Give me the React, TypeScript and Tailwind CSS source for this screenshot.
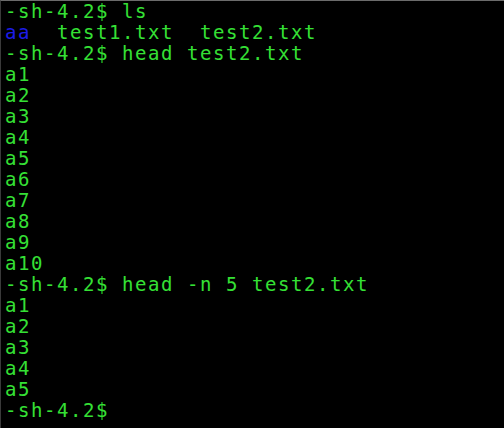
import React from "react";

const lines: { text: string; blue?: string }[] = [
  { text: "-sh-4.2$ ls" },
  { blue: "aa", text: "  test1.txt  test2.txt" },
  { text: "-sh-4.2$ head test2.txt" },
  { text: "a1" },
  { text: "a2" },
  { text: "a3" },
  { text: "a4" },
  { text: "a5" },
  { text: "a6" },
  { text: "a7" },
  { text: "a8" },
  { text: "a9" },
  { text: "a10" },
  { text: "-sh-4.2$ head -n 5 test2.txt" },
  { text: "a1" },
  { text: "a2" },
  { text: "a3" },
  { text: "a4" },
  { text: "a5" },
  { text: "-sh-4.2$" },
];

export default function App() {
  return (
    <div className="w-[504px] h-[428px] bg-black border-t border-l border-t-[#6b6b6b] border-l-[#3a3a3a] overflow-hidden">
      <div
        className="pl-[4px] pt-0 text-[19px] leading-[21px] tracking-[1.56px] text-[#35e035] whitespace-pre"
        style={{ fontFamily: '"DejaVu Sans Mono", monospace' }}
      >
        {lines.map((l, i) => (
          <div key={i}>
            {l.blue && <span className="text-[#1c1ce8]">{l.blue}</span>}
            {l.text}
          </div>
        ))}
      </div>
    </div>
  );
}
